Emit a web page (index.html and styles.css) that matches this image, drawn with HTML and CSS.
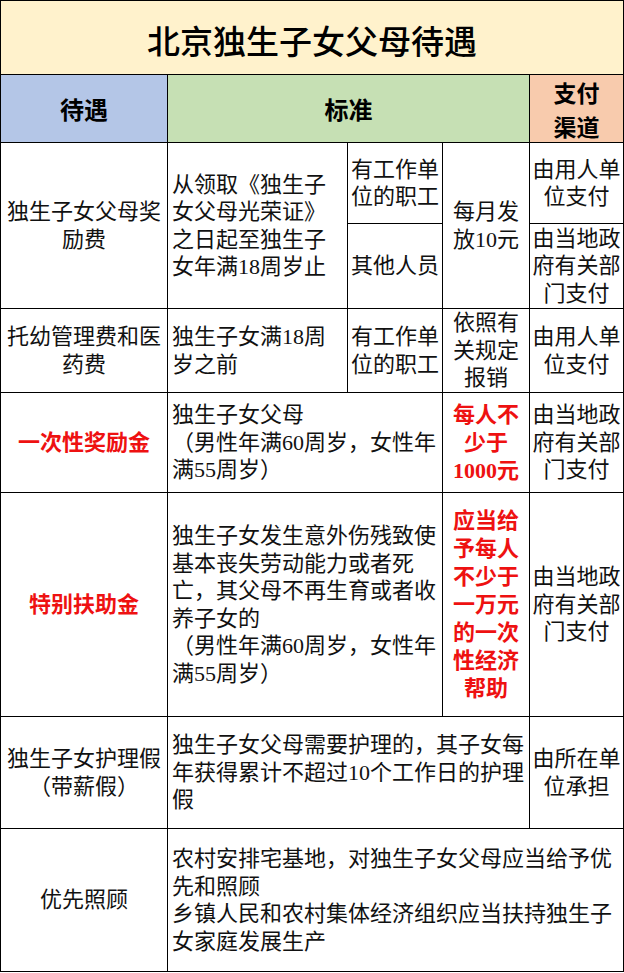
FILE: index.html
```html
<!DOCTYPE html>
<html lang="zh-CN">
<head>
<meta charset="utf-8">
<title>北京独生子女父母待遇</title>
<link rel="stylesheet" href="styles.css">
</head>
<body>
<div class="sheet">
  <div class="cell title">北京独生子女父母待遇</div>

  <div class="cell head blue">待遇</div>
  <div class="cell head green span-std">标准</div>
  <div class="cell head orange two"><span>支付<br>渠道</span></div>

  <div class="cell c1 r1">独生子女父母奖励费</div>
  <div class="cell c2 left r1"><span>从领取《独生子女父母光荣证》之日起至独生子女年满18周岁止</span></div>
  <div class="cell c3 r1a">有工作单位的职工</div>
  <div class="cell c3 r1b">其他人员</div>
  <div class="cell c4 r1"><span>每月发<br>放10元</span></div>
  <div class="cell c5 r1a">由用人单位支付</div>
  <div class="cell c5 r1b">由当地政府有关部门支付</div>

  <div class="cell c1">托幼管理费和医药费</div>
  <div class="cell c2 left">独生子女满18周岁之前</div>
  <div class="cell c3">有工作单位的职工</div>
  <div class="cell c4"><span>依照有<br>关规定<br>报销</span></div>
  <div class="cell c5">由用人单位支付</div>

  <div class="cell c1 red">一次性奖励金</div>
  <div class="cell left span23"><span>独生子女父母<br>（男性年满60周岁，女性年满55周岁）</span></div>
  <div class="cell c4 red"><span>每人不<br>少于<br>1000元</span></div>
  <div class="cell c5">由当地政府有关部门支付</div>

  <div class="cell c1 red">特别扶助金</div>
  <div class="cell left span23"><span>独生子女发生意外伤残致使基本丧失劳动能力或者死亡，其父母不再生育或者收养子女的<br>（男性年满60周岁，女性年满55周岁）</span></div>
  <div class="cell c4 red"><span>应当给<br>予每人<br>不少于<br>一万元<br>的一次<br>性经济<br>帮助</span></div>
  <div class="cell c5">由当地政府有关部门支付</div>

  <div class="cell c1"><span>独生子女护理假<br>（带薪假）</span></div>
  <div class="cell left span24">独生子女父母需要护理的，其子女每年获得累计不超过10个工作日的护理假</div>
  <div class="cell c5">由所在单位承担</div>

  <div class="cell c1">优先照顾</div>
  <div class="cell left span25"><span>农村安排宅基地，对独生子女父母应当给予优先和照顾<br>乡镇人民和农村集体经济组织应当扶持独生子女家庭发展生产</span></div>
</div>
</body>
</html>
```
FILE: styles.css
```css
html, body {
  margin: 0;
  padding: 0;
  background: #ffffff;
}

.sheet {
  box-sizing: border-box;
  width: 624px;
  padding: 1px;
  background: #000000;
  display: grid;
  grid-template-columns: 166px 179px 94px 86px 93px;
  grid-template-rows: 73px 67px 80px 84px 83px 99px 223px 111px 142px;
  gap: 1px;
  font-family: "Liberation Serif", "Noto Sans CJK SC", sans-serif;
  font-size: 22px;
  line-height: 27.5px;
  color: #111111;
}

.cell {
  background: #ffffff;
  display: flex;
  align-items: center;
  justify-content: center;
  text-align: center;
  min-width: 0;
  overflow: hidden;
}

.title {
  grid-column: 1 / 6;
  background: #fff2cc;
  font-family: "Noto Sans CJK SC", sans-serif;
  font-size: 33px;
  font-weight: 500;
  letter-spacing: 0;
  padding-top: 7px;
  box-sizing: border-box;
  color: #000000;
}

.head {
  font-family: "Noto Sans CJK SC", sans-serif;
  font-weight: 700;
  font-size: 24px;
  line-height: 30px;
  color: #000000;
}

.head.two {
  font-size: 23px;
  line-height: 34px;
}

.blue { background: #b4c6e7; }
.green { background: #c6e0b4; }
.orange { background: #f8cbad; }

.span-std { grid-column: 2 / 5; }

.c1 { grid-column: 1; padding: 0 2px; }
.c2 { grid-column: 2; }
.c3 { grid-column: 3; padding: 0 2px; }
.c4 { grid-column: 4; }
.c5 { grid-column: 5; padding: 0 1px; }

.r1 { grid-row: 3 / 5; }
.r1a { grid-row: 3; }
.r1b { grid-row: 4; }

.span23 { grid-column: 2 / 4; }
.span24 { grid-column: 2 / 5; }
.span25 { grid-column: 2 / 6; }

.left {
  justify-content: flex-start;
  text-align: left;
  padding-left: 4px;
  padding-right: 0;
}

.red {
  color: #ee1111;
  font-weight: 700;
}

.c4.red {
  line-height: 28px;
}
```
